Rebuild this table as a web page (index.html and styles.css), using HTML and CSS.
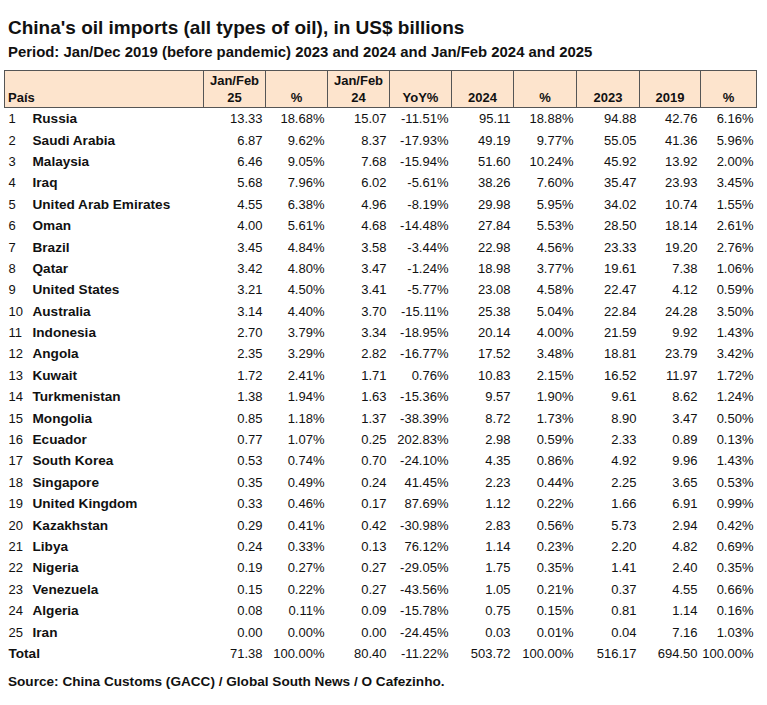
FILE: index.html
```html
<!DOCTYPE html>
<html>
<head>
<meta charset="utf-8">
<link rel="stylesheet" href="styles.css">
</head>
<body>
<h1 class="title">China's oil imports (all types of oil), in US$ billions</h1>
<h2 class="subtitle">Period: Jan/Dec 2019 (before pandemic) 2023 and 2024 and Jan/Feb 2024 and 2025</h2>
<table class="data">
<colgroup>
<col class="c-name"><col class="c-n"><col class="c-n"><col class="c-n"><col class="c-n"><col class="c-n"><col class="c-n2"><col class="c-n2"><col class="c-n3"><col class="c-last">
</colgroup>
<thead>
<tr>
<th class="h-left">País</th>
<th>Jan/Feb<br>25</th>
<th>%</th>
<th>Jan/Feb<br>24</th>
<th>YoY%</th>
<th>2024</th>
<th>%</th>
<th>2023</th>
<th>2019</th>
<th>%</th>
</tr>
</thead>
<tbody id="rows">
<tr><td><span class="rank">1</span><b class="name">Russia</b></td><td>13.33</td><td>18.68%</td><td>15.07</td><td>-11.51%</td><td>95.11</td><td>18.88%</td><td>94.88</td><td>42.76</td><td>6.16%</td></tr>
<tr><td><span class="rank">2</span><b class="name">Saudi Arabia</b></td><td>6.87</td><td>9.62%</td><td>8.37</td><td>-17.93%</td><td>49.19</td><td>9.77%</td><td>55.05</td><td>41.36</td><td>5.96%</td></tr>
<tr><td><span class="rank">3</span><b class="name">Malaysia</b></td><td>6.46</td><td>9.05%</td><td>7.68</td><td>-15.94%</td><td>51.60</td><td>10.24%</td><td>45.92</td><td>13.92</td><td>2.00%</td></tr>
<tr><td><span class="rank">4</span><b class="name">Iraq</b></td><td>5.68</td><td>7.96%</td><td>6.02</td><td>-5.61%</td><td>38.26</td><td>7.60%</td><td>35.47</td><td>23.93</td><td>3.45%</td></tr>
<tr><td><span class="rank">5</span><b class="name">United Arab Emirates</b></td><td>4.55</td><td>6.38%</td><td>4.96</td><td>-8.19%</td><td>29.98</td><td>5.95%</td><td>34.02</td><td>10.74</td><td>1.55%</td></tr>
<tr><td><span class="rank">6</span><b class="name">Oman</b></td><td>4.00</td><td>5.61%</td><td>4.68</td><td>-14.48%</td><td>27.84</td><td>5.53%</td><td>28.50</td><td>18.14</td><td>2.61%</td></tr>
<tr><td><span class="rank">7</span><b class="name">Brazil</b></td><td>3.45</td><td>4.84%</td><td>3.58</td><td>-3.44%</td><td>22.98</td><td>4.56%</td><td>23.33</td><td>19.20</td><td>2.76%</td></tr>
<tr><td><span class="rank">8</span><b class="name">Qatar</b></td><td>3.42</td><td>4.80%</td><td>3.47</td><td>-1.24%</td><td>18.98</td><td>3.77%</td><td>19.61</td><td>7.38</td><td>1.06%</td></tr>
<tr><td><span class="rank">9</span><b class="name">United States</b></td><td>3.21</td><td>4.50%</td><td>3.41</td><td>-5.77%</td><td>23.08</td><td>4.58%</td><td>22.47</td><td>4.12</td><td>0.59%</td></tr>
<tr><td><span class="rank">10</span><b class="name">Australia</b></td><td>3.14</td><td>4.40%</td><td>3.70</td><td>-15.11%</td><td>25.38</td><td>5.04%</td><td>22.84</td><td>24.28</td><td>3.50%</td></tr>
<tr><td><span class="rank">11</span><b class="name">Indonesia</b></td><td>2.70</td><td>3.79%</td><td>3.34</td><td>-18.95%</td><td>20.14</td><td>4.00%</td><td>21.59</td><td>9.92</td><td>1.43%</td></tr>
<tr><td><span class="rank">12</span><b class="name">Angola</b></td><td>2.35</td><td>3.29%</td><td>2.82</td><td>-16.77%</td><td>17.52</td><td>3.48%</td><td>18.81</td><td>23.79</td><td>3.42%</td></tr>
<tr><td><span class="rank">13</span><b class="name">Kuwait</b></td><td>1.72</td><td>2.41%</td><td>1.71</td><td>0.76%</td><td>10.83</td><td>2.15%</td><td>16.52</td><td>11.97</td><td>1.72%</td></tr>
<tr><td><span class="rank">14</span><b class="name">Turkmenistan</b></td><td>1.38</td><td>1.94%</td><td>1.63</td><td>-15.36%</td><td>9.57</td><td>1.90%</td><td>9.61</td><td>8.62</td><td>1.24%</td></tr>
<tr><td><span class="rank">15</span><b class="name">Mongolia</b></td><td>0.85</td><td>1.18%</td><td>1.37</td><td>-38.39%</td><td>8.72</td><td>1.73%</td><td>8.90</td><td>3.47</td><td>0.50%</td></tr>
<tr><td><span class="rank">16</span><b class="name">Ecuador</b></td><td>0.77</td><td>1.07%</td><td>0.25</td><td>202.83%</td><td>2.98</td><td>0.59%</td><td>2.33</td><td>0.89</td><td>0.13%</td></tr>
<tr><td><span class="rank">17</span><b class="name">South Korea</b></td><td>0.53</td><td>0.74%</td><td>0.70</td><td>-24.10%</td><td>4.35</td><td>0.86%</td><td>4.92</td><td>9.96</td><td>1.43%</td></tr>
<tr><td><span class="rank">18</span><b class="name">Singapore</b></td><td>0.35</td><td>0.49%</td><td>0.24</td><td>41.45%</td><td>2.23</td><td>0.44%</td><td>2.25</td><td>3.65</td><td>0.53%</td></tr>
<tr><td><span class="rank">19</span><b class="name">United Kingdom</b></td><td>0.33</td><td>0.46%</td><td>0.17</td><td>87.69%</td><td>1.12</td><td>0.22%</td><td>1.66</td><td>6.91</td><td>0.99%</td></tr>
<tr><td><span class="rank">20</span><b class="name">Kazakhstan</b></td><td>0.29</td><td>0.41%</td><td>0.42</td><td>-30.98%</td><td>2.83</td><td>0.56%</td><td>5.73</td><td>2.94</td><td>0.42%</td></tr>
<tr><td><span class="rank">21</span><b class="name">Libya</b></td><td>0.24</td><td>0.33%</td><td>0.13</td><td>76.12%</td><td>1.14</td><td>0.23%</td><td>2.20</td><td>4.82</td><td>0.69%</td></tr>
<tr><td><span class="rank">22</span><b class="name">Nigeria</b></td><td>0.19</td><td>0.27%</td><td>0.27</td><td>-29.05%</td><td>1.75</td><td>0.35%</td><td>1.41</td><td>2.40</td><td>0.35%</td></tr>
<tr><td><span class="rank">23</span><b class="name">Venezuela</b></td><td>0.15</td><td>0.22%</td><td>0.27</td><td>-43.56%</td><td>1.05</td><td>0.21%</td><td>0.37</td><td>4.55</td><td>0.66%</td></tr>
<tr><td><span class="rank">24</span><b class="name">Algeria</b></td><td>0.08</td><td>0.11%</td><td>0.09</td><td>-15.78%</td><td>0.75</td><td>0.15%</td><td>0.81</td><td>1.14</td><td>0.16%</td></tr>
<tr><td><span class="rank">25</span><b class="name">Iran</b></td><td>0.00</td><td>0.00%</td><td>0.00</td><td>-24.45%</td><td>0.03</td><td>0.01%</td><td>0.04</td><td>7.16</td><td>1.03%</td></tr>
<tr class="total"><td><b class="name">Total</b></td><td>71.38</td><td>100.00%</td><td>80.40</td><td>-11.22%</td><td>503.72</td><td>100.00%</td><td>516.17</td><td>694.50</td><td>100.00%</td></tr>
</tbody>
</table>
<p class="source">Source: China Customs (GACC) / Global South News / O Cafezinho.</p>
</body>
</html>
```
FILE: styles.css
```css
html, body {
  margin: 0;
  padding: 0;
  background: #ffffff;
}
body {
  font-family: "Liberation Sans", Arial, sans-serif;
  color: #111111;
  padding: 17px 0 0 4px;
}
.title {
  margin: 0 0 0 4px;
  font-size: 19px;
  font-weight: bold;
  line-height: 22px;
}
.subtitle {
  margin: 2px 0 0 4px;
  font-size: 14.9px;
  font-weight: bold;
  line-height: 22px;
}
.data {
  margin-top: 7px;
  border-collapse: collapse;
  table-layout: fixed;
  width: 753px;
  font-size: 13px;
}
.c-name { width: 199px; }
.c-n { width: 62px; }
.c-n2 { width: 63px; }
.c-n3 { width: 61px; }
.c-last { width: 56px; }
.data th {
  background: #fde4cd;
  border: 1px solid #555555;
  font-weight: bold;
  text-align: center;
  vertical-align: bottom;
  line-height: 17px;
  height: 35px;
  padding: 0 2px 1px 2px;
}
.data th.h-left {
  text-align: left;
  padding-left: 3px;
}
.data td {
  height: 21.4px;
  padding: 0 3px 0 0;
  text-align: right;
  white-space: nowrap;
  line-height: 15px;
}
.data td:first-child {
  text-align: left;
  padding-left: 4px;
}
.rank {
  display: inline-block;
  width: 24px;
}
.name {
  font-size: 13.6px;
}
.total td {
  height: 21px;
}
.source {
  margin: 10px 0 0 4px;
  font-size: 13.6px;
  font-weight: bold;
  line-height: 16px;
}
```
